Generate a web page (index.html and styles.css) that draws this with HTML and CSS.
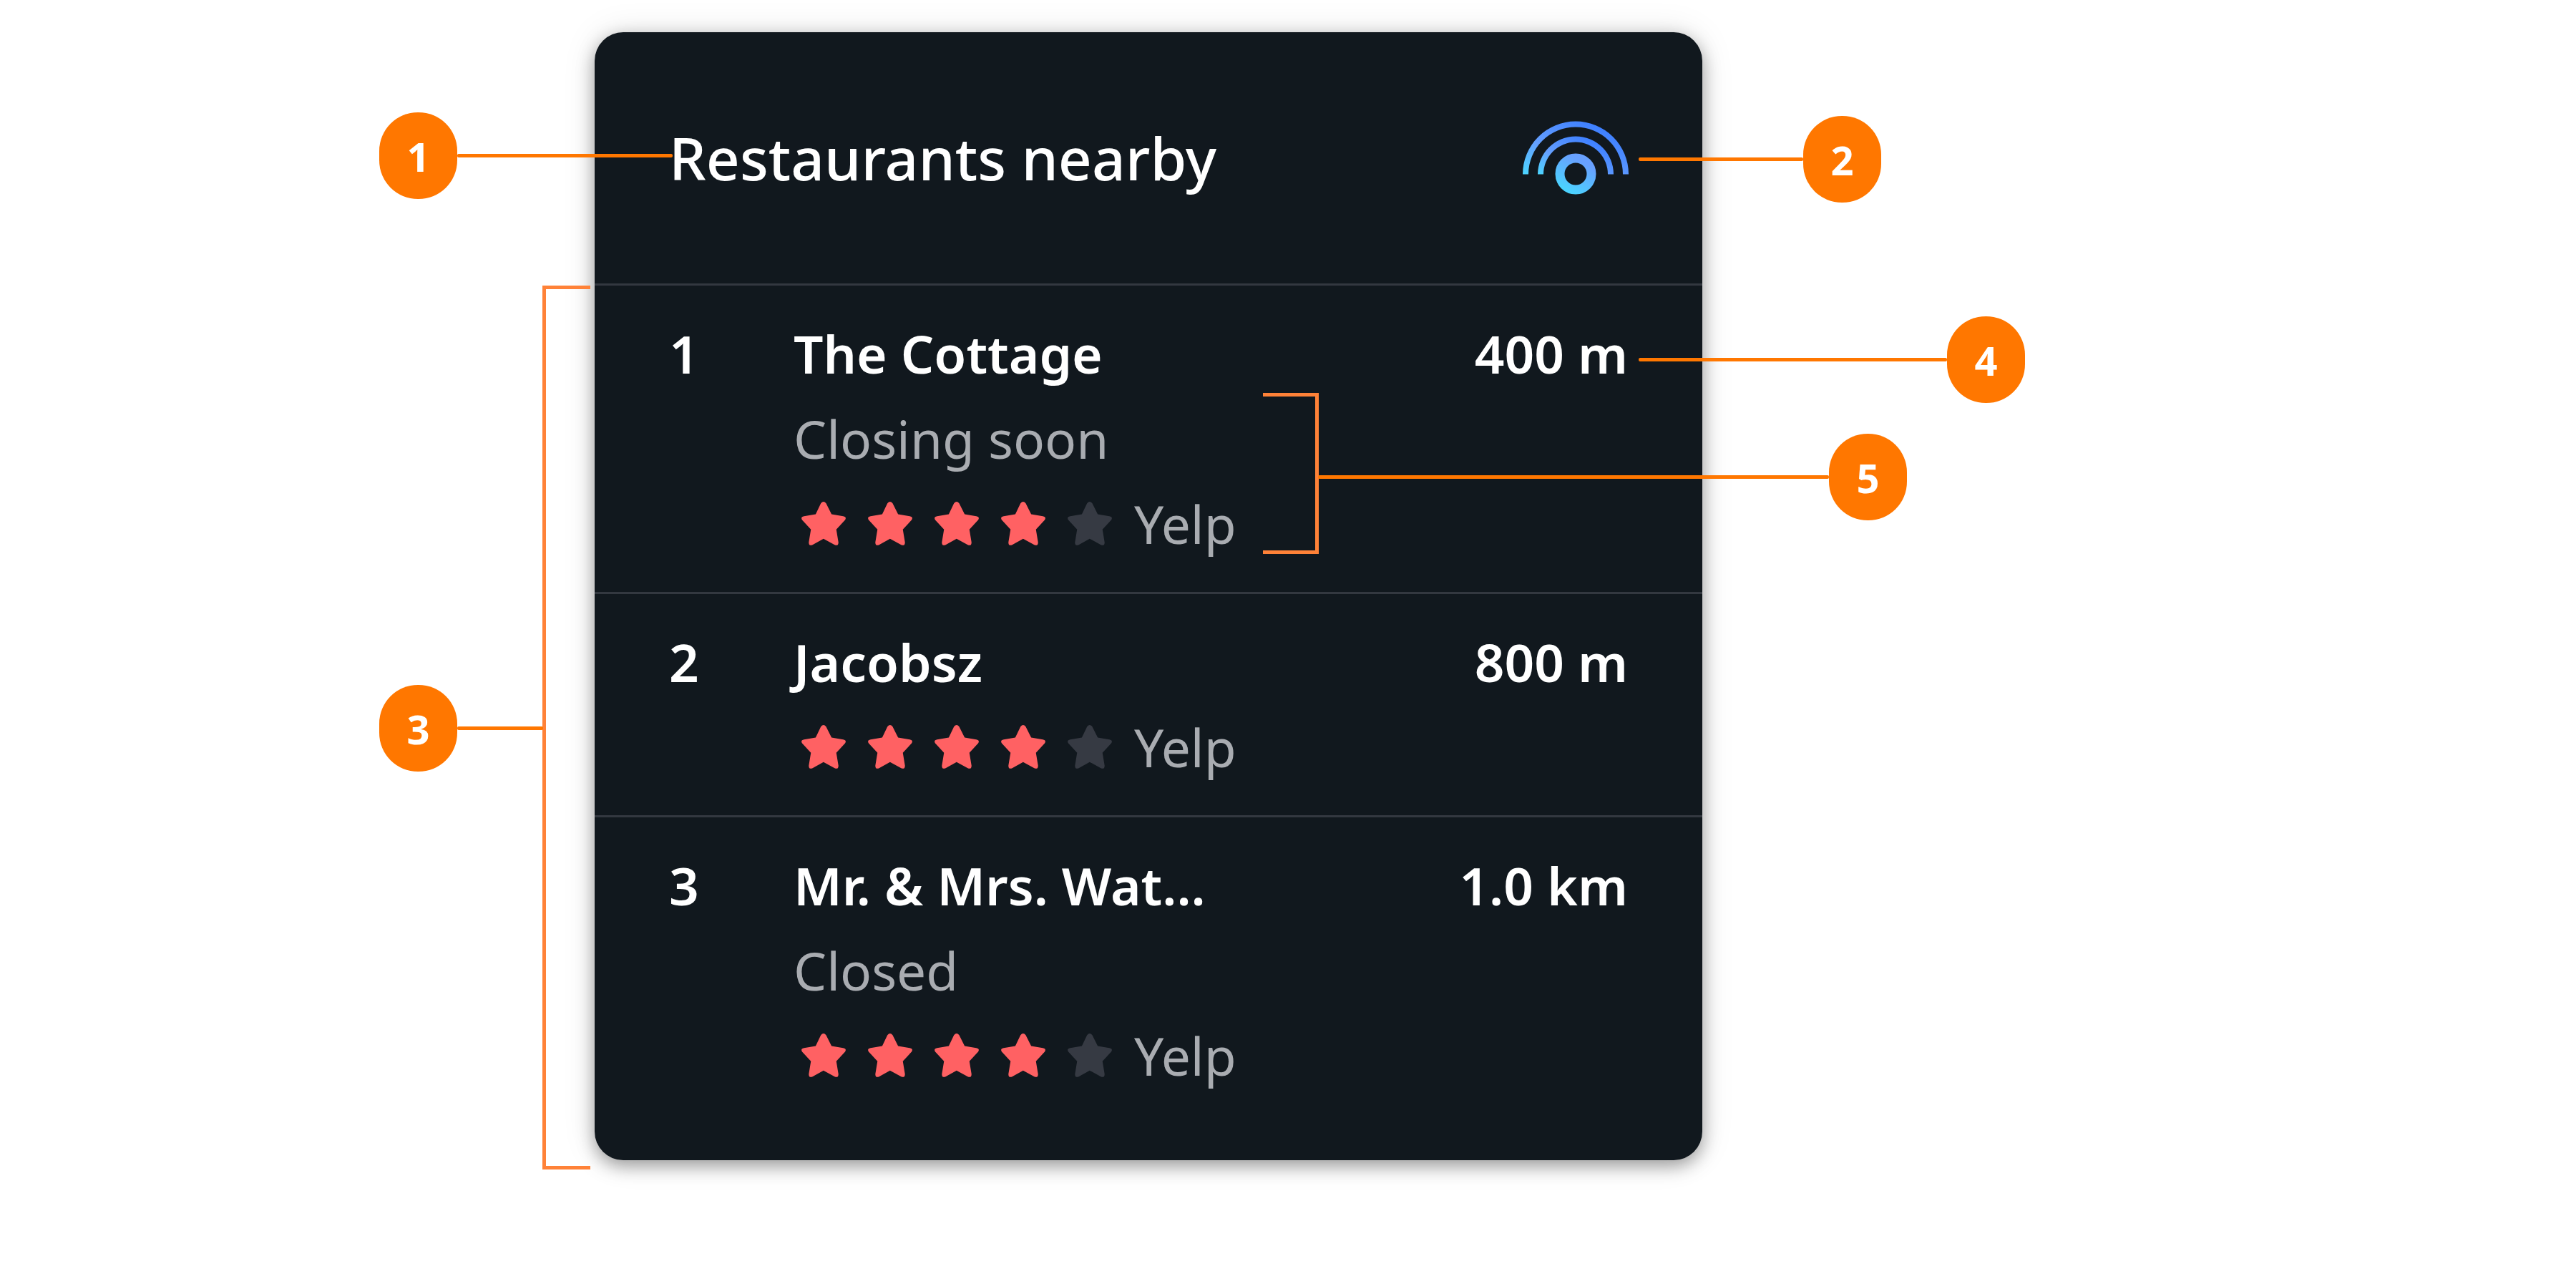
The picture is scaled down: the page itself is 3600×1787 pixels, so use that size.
FILE: index.html
```html
<!DOCTYPE html>
<html lang="en">
<head>
<meta charset="utf-8">
<title>Restaurants nearby</title>
<link rel="stylesheet" href="styles.css">
</head>
<body>
<svg width="0" height="0" class="defs" aria-hidden="true">
  <symbol id="star" viewBox="0 0 187 184">
    <path d="M82 7Q93 -7 104 7L127 53L176 61Q192 64 184 77L147 117L156 171Q156 188 140 182L93 156L47 182Q31 188 31 171L40 117L3 77Q-5 64 11 61L60 53Z"/>
  </symbol>
</svg>
<main class="page">
  <article class="card">
    <header class="card-header">
      <h1 class="title">Restaurants nearby</h1>
      <svg class="logo" viewBox="0 0 148 103" aria-hidden="true">
        <defs>
          <linearGradient id="arc" x1="0" y1="1" x2="0.8" y2="0.2">
            <stop offset="0" stop-color="#4bd6ff"/>
            <stop offset="0.45" stop-color="#65a0ff"/>
            <stop offset="1" stop-color="#3f80ff"/>
          </linearGradient>
          <linearGradient id="ring" x1="0.2" y1="1" x2="0.7" y2="0.1">
            <stop offset="0" stop-color="#4bd2ff"/>
            <stop offset="1" stop-color="#68a0ff"/>
          </linearGradient>
        </defs>
        <path d="M0 74.500A74 74 0 0 1 148 74.500H140A66 66 0 0 0 8 74.500Z" fill="url(#arc)"/>
        <path d="M21 74.500A53 53 0 0 1 127 74.500H119A45 45 0 0 0 29 74.500Z" fill="url(#arc)"/>
        <circle cx="74" cy="74" r="22" fill="none" stroke="url(#ring)" stroke-width="13"/>
      </svg>
      <div class="callout callout-title"><span class="badge">1</span><span class="line"></span></div>
      <div class="callout callout-logo"><span class="line"></span><span class="badge">2</span></div>
    </header>
    <div class="results">
      <ol class="list">
        <li class="row">
          <span class="rank">1</span>
          <div class="info">
            <h2 class="name">The Cottage</h2>
            <p class="status">Closing soon</p>
            <div class="rating">
              <svg class="star"><use href="#star"/></svg>
              <svg class="star"><use href="#star"/></svg>
              <svg class="star"><use href="#star"/></svg>
              <svg class="star"><use href="#star"/></svg>
              <svg class="star star-off"><use href="#star"/></svg>
              <span>Yelp</span>
            </div>
          </div>
          <span class="distance">400 m</span>
          <div class="callout callout-distance"><span class="line"></span><span class="badge">4</span></div>
          <div class="bracket bracket-info"></div>
          <div class="callout callout-info"><span class="line"></span><span class="badge">5</span></div>
        </li>
        <li class="row">
          <span class="rank">2</span>
          <div class="info">
            <h2 class="name">Jacobsz</h2>
            <div class="rating">
              <svg class="star"><use href="#star"/></svg>
              <svg class="star"><use href="#star"/></svg>
              <svg class="star"><use href="#star"/></svg>
              <svg class="star"><use href="#star"/></svg>
              <svg class="star star-off"><use href="#star"/></svg>
              <span>Yelp</span>
            </div>
          </div>
          <span class="distance">800 m</span>
        </li>
        <li class="row">
          <span class="rank">3</span>
          <div class="info">
            <h2 class="name">Mr. &amp; Mrs. Wat...</h2>
            <p class="status">Closed</p>
            <div class="rating">
              <svg class="star"><use href="#star"/></svg>
              <svg class="star"><use href="#star"/></svg>
              <svg class="star"><use href="#star"/></svg>
              <svg class="star"><use href="#star"/></svg>
              <svg class="star star-off"><use href="#star"/></svg>
              <span>Yelp</span>
            </div>
          </div>
          <span class="distance">1.0 km</span>
        </li>
      </ol>
      <div class="bracket bracket-list"></div>
      <div class="callout callout-list"><span class="badge">3</span><span class="line"></span></div>
    </div>
  </article>
</main>
</body>
</html>
```
FILE: styles.css
```css
* {
  box-sizing: border-box;
}

body {
  margin: 0;
  background: #fff;
  color: #fff;
  font-family: "Noto Sans", "Open Sans", sans-serif;
}

h1,
h2,
p,
ol {
  margin: 0;
  padding: 0;
  font: inherit;
}

.defs {
  position: absolute;
}

.page {
  display: grid;
  grid-template-columns: 831fr 1548fr 1221fr;
  padding: 45px 0;
}

.card {
  grid-column: 2;
  background: #11181e;
  border-radius: 40px;
  box-shadow: 0 8px 24px rgba(0, 0, 0, 0.36), 0 0 48px rgba(0, 0, 0, 0.1);
}

.card-header {
  position: relative;
  display: flex;
  align-items: center;
  justify-content: space-between;
  padding: 116px 103px 116px 104px;
}

.card-header .title {
  font-size: 82px;
  line-height: 119px;
  font-weight: 500;
}

.logo {
  width: 148px;
  height: 103px;
}

.results {
  position: relative;
  padding-bottom: 51px;
}

.list {
  list-style: none;
}

.row {
  position: relative;
  display: flex;
  padding: 35px 104px 36px;
  border-top: 3px solid #333840;
  font-size: 73px;
  line-height: 119px;
}

.rank {
  width: 174px;
}

.info {
  flex: 1;
}

.rank,
.row .name,
.distance {
  font-weight: 600;
}

.status,
.rating {
  color: #a9acb1;
}

.rating {
  display: flex;
  align-items: center;
  gap: 31px;
  padding-left: 11px;
}

.star {
  width: 62px;
  height: 61px;
  fill: #ff6163;
}

.star-off {
  fill: #363a43;
}

/* Numbered callouts around the card */
.callout {
  position: absolute;
  display: flex;
  align-items: center;
}

.badge {
  width: 109px;
  height: 121px;
  border-radius: 54px;
  background: #ff7700;
  font-size: 56px;
  line-height: 122px;
  font-weight: 700;
  text-align: center;
}

.line {
  flex: 1;
  height: 5px;
  border-radius: 2px;
  background: #ff7700;
}

.callout-title {
  top: 112px;
  left: -301px;
  width: 410px;
}

.callout-logo {
  top: 117px;
  right: -250px;
  width: 339px;
}

.callout-distance {
  top: 43px;
  right: -451px;
  width: 540px;
}

.callout-info {
  top: 207px;
  left: 1011px;
  right: -286px;
}

.callout-list {
  top: 561px;
  left: -301px;
  width: 229px;
}

.bracket {
  position: absolute;
  border: 5px solid #ff8238;
}

.bracket-info {
  top: 150px;
  left: 934px;
  width: 78px;
  height: 225px;
  border-left: 0;
}

.bracket-list {
  top: 3px;
  bottom: -13px;
  left: -73px;
  width: 67px;
  border-right: 0;
}
```
